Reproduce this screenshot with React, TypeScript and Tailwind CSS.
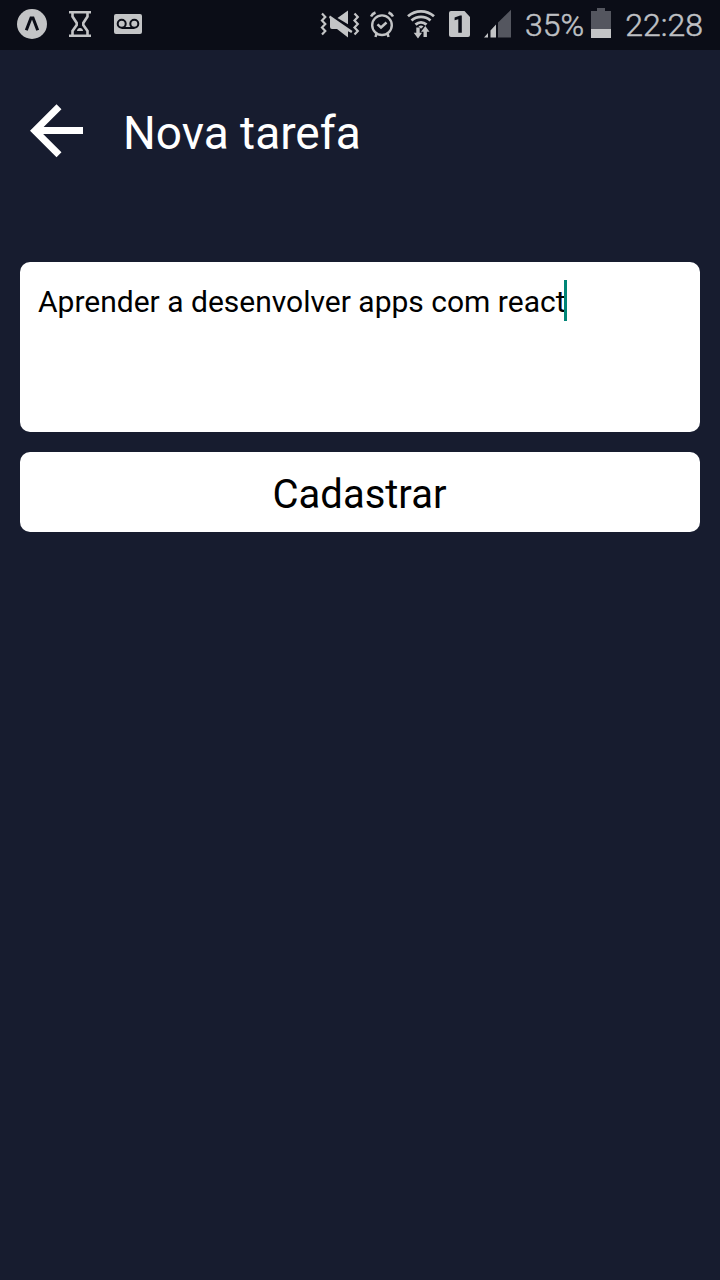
import type { ReactNode } from "react";

function StatusIcon({ x, width, children }: { x: number; width: number; children: ReactNode }) {
  return (
    <svg width={width} height={50} viewBox={`${x} 0 ${width} 50`} fill="none" className="block shrink-0" aria-hidden="true">
      {children}
    </svg>
  );
}

const INK = "#c3c4c6";
const DIM = "#54565f";
const BAR = "#0b0d17";

function StatusBar() {
  return (
    <header className="flex h-[50px] shrink-0 items-center justify-between bg-[#0b0d17] pr-[17px] pl-4 text-[#bfc0c4]">
      <div className="flex items-center gap-4">
        <StatusIcon x={16} width={32}>
          <circle cx="32" cy="24" r="15" fill={INK} />
          <path d="M26.300 30.300 31 18h2l4.700 12.300" stroke={BAR} strokeWidth="3" />
        </StatusIcon>
        <StatusIcon x={64} width={32}>
          <path d="M69 12.300h22M69 35.700h22" stroke={INK} strokeWidth="2.400" />
          <path d="M72.500 13v3.500l4.200 6.500v2l-4.200 6V35M87.500 13v3.500l-4.200 6.500v2l4.200 6V35" stroke={INK} strokeWidth="2.600" />
          <path d="M77 31c0-1.500 1.200-3 3-3s3 1.500 3 3z" fill={INK} />
        </StatusIcon>
        <StatusIcon x={112} width={32}>
          <rect x="114" y="14" width="28" height="20" rx="2" fill={INK} />
          <circle cx="121.700" cy="23.800" r="4" stroke={BAR} strokeWidth="2" />
          <circle cx="134.300" cy="23.800" r="4" stroke={BAR} strokeWidth="2" />
          <path d="M121.700 28h12.600" stroke={BAR} strokeWidth="2" />
        </StatusIcon>
      </div>
      <div className="flex items-center">
        <StatusIcon x={318} width={46}>
          <path d="m322 13.500 3.300 3.500-3.300 3.500 3.300 3.500-3.300 3.500 3.300 3.500-3.300 3.500M354.500 13.500l3.300 3.500-3.300 3.500 3.300 3.500-3.300 3.500 3.300 3.500-3.300 3.500" stroke={INK} strokeWidth="2.200" />
          <path d="M337.500 18 348 10.500v13.700z" fill={INK} />
          <path d="M329 17.200l1-1.800L352.500 31l-1.200 2-3.300-1.800v6.300l-11-8.500h-5a2 2 0 0 1-2-2v-8z" fill={INK} />
        </StatusIcon>
        <StatusIcon x={364} width={40}>
          <circle cx="382" cy="25.200" r="9.800" stroke={INK} strokeWidth="2.400" />
          <path d="m377.500 24.300 3.500 3.200 5.500-5M371 16.500c1-2 2.500-3.200 4.500-4M393 16.500c-1-2-2.500-3.200-4.500-4M376.500 33.500l-1 3.500M387.500 33.500l1 3.500" stroke={INK} strokeWidth="2.500" />
        </StatusIcon>
        <StatusIcon x={404} width={40}>
          <path d="M408 16.300c7.500-6.600 18.500-6.600 26 0M411.500 20.500c5.400-4.800 13.600-4.800 19 0M415.500 24.600c3.300-2.900 7.700-2.900 11 0" stroke={INK} strokeWidth="2.800" />
          <path d="M418.500 26.500c1.500-1.300 3.500-1.300 5 0l-2.500 2.300z" fill={INK} />
          <path d="M416.300 27.500h3.400v5.200h2.400l-4.100 5.800-4.300-5.800h2.600zM423.500 37v-5.300H421l4.300-5.700 4.200 5.700h-2.600V37z" fill={INK} />
        </StatusIcon>
        <StatusIcon x={444} width={34}>
          <path d="M451 11h13.500l5.500 6v18a2 2 0 0 1-2 2h-17a2 2 0 0 1-2-2V13a2 2 0 0 1 2-2z" fill={INK} />
          <path d="M461.800 15.500v17.200h-3.500V19.300l-3.700 1v-2.900l5.500-1.900z" fill={BAR} />
        </StatusIcon>
        <StatusIcon x={478} width={47}>
          <path d="M484 37.500 488 33v4.500zM490.500 30.500l5.500-6v13h-5.500z" fill={INK} />
          <path d="M498 22.500 511 9.800v27.700h-13z" fill={DIM} />
        </StatusIcon>
        <span className="w-16 text-[32px] leading-[50px] font-light whitespace-nowrap [-webkit-text-stroke:0.5px_#bfc0c4]">35%</span>
        <StatusIcon x={589} width={24}>
          <path d="M597 8h8v3h6v27h-20V11h6z" fill={DIM} />
          <path d="M591 29h20v9h-20z" fill={INK} />
        </StatusIcon>
        <span className="w-[90px] text-right text-[32px] leading-[50px] font-light whitespace-nowrap [-webkit-text-stroke:0.5px_#bfc0c4]">22:28</span>
      </div>
    </header>
  );
}

export default function App() {
  return (
    <div className="flex h-[1280px] w-[720px] flex-col overflow-hidden bg-[#171c2f] font-['Roboto',sans-serif]">
      <StatusBar />
      <div className="flex h-[162px] items-center pl-[30px]">
        <svg width="54" height="54" viewBox="0 0 54 54" fill="none" className="block" aria-label="Voltar">
          <path d="M29 2.700 4.900 26.700 29 50.700M5 26.500H53" stroke="#fff" strokeWidth="7" />
        </svg>
        <h1 className="pt-1 pl-[39px] text-[46px] leading-[54px] font-normal text-white">Nova tarefa</h1>
      </div>
      <main className="flex flex-col gap-5 px-5 pt-[50px]">
        <div className="flex h-[170px] items-start rounded-[10px] bg-white pt-[18px] pl-[18px]">
          <span className="text-[30px] leading-[44px] whitespace-nowrap text-black">Aprender a desenvolver apps com react</span>
          <span className="-ml-px h-[41px] w-[3px] bg-[#008577]" />
        </div>
        <button className="flex h-20 items-center justify-center rounded-[10px] bg-white pt-1.5 pr-px text-[40px] leading-none text-black">Cadastrar</button>
      </main>
    </div>
  );
}
